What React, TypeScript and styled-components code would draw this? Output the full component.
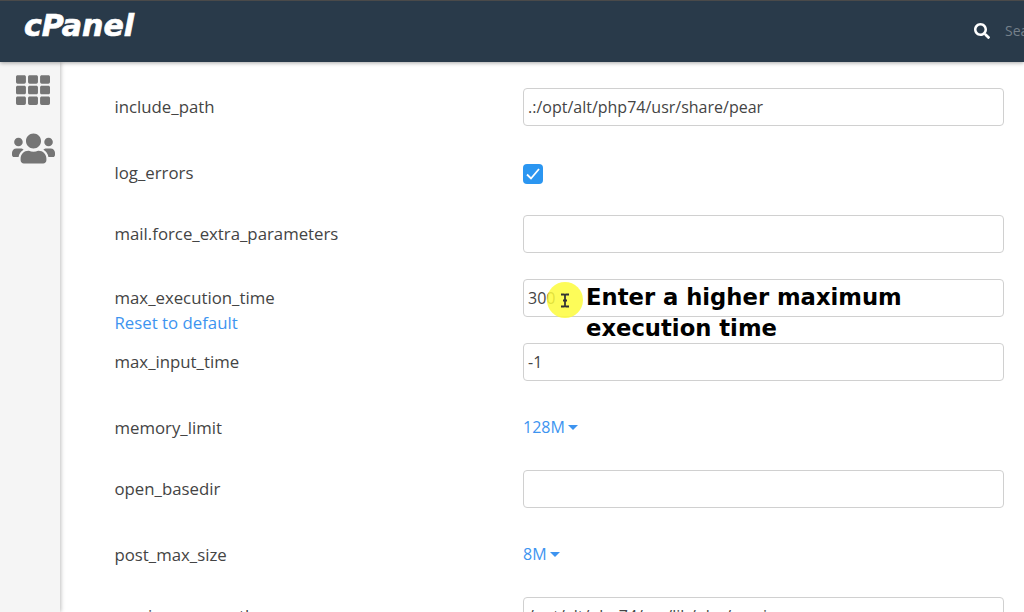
import React from "react";
import styled, { createGlobalStyle } from "styled-components";
import { FaSearch, FaTh, FaUsers } from "react-icons/fa";

const Global = createGlobalStyle`
  html, body { margin: 0; padding: 0; height: 100%; overflow: hidden; background: #fff; }
  body { font-family: "Open Sans", "Liberation Sans", sans-serif; color: #444; }
  * { box-sizing: border-box; }
`;

const Page = styled.div`
  width: 1024px;
  height: 612px;
  display: flex;
  flex-direction: column;
  overflow: hidden;
  position: relative;
`;

const Header = styled.header`
  height: 62px;
  flex: none;
  background: #293a4a;
  border-top: 1px solid #4a4a4a;
  box-shadow: 0 1px 4px rgba(0, 0, 0, 0.35);
  display: flex;
  align-items: flex-start;
  justify-content: space-between;
  position: relative;
  z-index: 2;
`;

const Logo = styled.div`
  margin: 4px 0 0 24px;
  font-family: "DejaVu Sans", sans-serif;
  font-weight: 700;
  font-style: italic;
  font-size: 30px;
  line-height: 42px;
  color: #fff;
  -webkit-text-stroke: 0.7px #fff;
`;

const Search = styled.div`
  display: flex;
  align-items: center;
  gap: 15px;
  margin-top: 21px;
  width: 50px;
  color: #fff;
  line-height: 18px;
  white-space: nowrap;
  overflow: hidden;
  svg { flex: none; }
`;

const SearchHint = styled.span`
  font-size: 14px;
  color: #75808b;
`;

const Body = styled.div`
  flex: 1;
  display: flex;
  min-height: 0;
`;

const Sidebar = styled.nav`
  width: 60px;
  flex: none;
  background: #f5f5f5;
  box-shadow: 1px 0 4px rgba(0, 0, 0, 0.25);
  color: #757575;
  display: flex;
  flex-direction: column;
  align-items: center;
  padding: 11px 0 0 6px;
  gap: 20px;
  position: relative;
  z-index: 1;
`;

const Main = styled.main`
  flex: 1;
  padding: 26px 20px 0 55px;
`;

const Row = styled.div<{ $h?: number }>`
  display: grid;
  grid-template-columns: 408px 481px;
  align-items: center;
  height: ${(p) => p.$h ?? 38}px;
  padding-top: ${(p) => (p.$h ? 4 : 0)}px;
  margin-bottom: 26px;
`;

const LabelCell = styled.div`
  font-size: 16.8px;
  line-height: 24px;
  color: #444;
  position: relative;
  margin-left: -0.5px;
`;

const Reset = styled.a`
  position: absolute;
  left: 0;
  top: 25px;
  color: #3d94f0;
  white-space: nowrap;
`;

const Field = styled.div`
  height: 38px;
  border: 1px solid #d0d0d0;
  border-radius: 4px;
  padding: 0 4px;
  font-size: 16px;
  line-height: 36px;
  color: #444;
  overflow: hidden;
  white-space: nowrap;
  background: #fff;
`;

const Check = styled.div`
  width: 20px;
  height: 20px;
  border-radius: 4px;
  background: #2b96f1;
  display: flex;
  align-items: center;
  justify-content: center;
  margin-top: 2px;
`;

const Select = styled.div`
  font-size: 16px;
  line-height: 24px;
  color: #3d94f0;
  display: flex;
  align-items: center;
  gap: 3px;
  margin-top: -1.5px;
`;

const Caret = styled.span`
  width: 0;
  height: 0;
  margin-top: 2px;
  border-left: 5px solid transparent;
  border-right: 5px solid transparent;
  border-top: 5px solid #3d94f0;
`;

const Highlight = styled.div`
  position: absolute;
  left: 547px;
  top: 282px;
  width: 36px;
  height: 36px;
  border-radius: 50%;
  background: rgba(253, 251, 60, 0.85);
  display: flex;
  align-items: center;
  justify-content: center;
`;

const Annotation = styled.div`
  position: absolute;
  left: 586px;
  top: 282px;
  width: 350px;
  font-family: "DejaVu Sans", sans-serif;
  font-weight: 700;
  font-size: 22.7px;
  line-height: 30.5px;
  color: #000;
`;

const rows = [
  { label: "include_path", value: ".:/opt/alt/php74/usr/share/pear" },
  { label: "log_errors", check: true, h: 37 },
  { label: "mail.force_extra_parameters", value: "" },
  { label: "max_execution_time", value: "300", reset: true },
  { label: "max_input_time", value: "-1" },
  { label: "memory_limit", select: "128M", h: 37 },
  { label: "open_basedir", value: "" },
  { label: "post_max_size", select: "8M", h: 37 },
  { label: "session.save_path", value: "/opt/alt/php74/var/lib/php/session" },
];

export default function App() {
  return (
    <Page>
      <Global />
      <Header>
        <Logo>cPanel</Logo>
        <Search>
          <FaSearch size={16} />
          <SearchHint>Search</SearchHint>
        </Search>
      </Header>
      <Body>
        <Sidebar>
          <FaTh size={34} />
          <FaUsers size={43} />
        </Sidebar>
        <Main>
          {rows.map((r) => (
            <Row key={r.label} $h={r.h}>
              <LabelCell>
                {r.label}
                {r.reset && <Reset>Reset to default</Reset>}
              </LabelCell>
              {r.check ? (
                <Check>
                  <svg width="16" height="14" viewBox="0 0 16 14" fill="none">
                    <path d="M2 7.5 L6 11.5 L14 2" stroke="#fff" strokeWidth="1.8" />
                  </svg>
                </Check>
              ) : r.select ? (
                <Select>
                  {r.select}
                  <Caret />
                </Select>
              ) : (
                <Field>{r.value}</Field>
              )}
            </Row>
          ))}
        </Main>
      </Body>
      <Highlight>
        <svg width="10" height="15" viewBox="0 0 10 14" fill="none">
          <path d="M1 1 H4 Q5 1.5 6 1 H9 M5 1.5 V12.5 M1 13 H4 Q5 12.5 6 13 H9 M3 7 H7" stroke="#333" strokeWidth="1.8" />
        </svg>
      </Highlight>
      <Annotation>Enter a higher maximum execution time</Annotation>
    </Page>
  );
}
